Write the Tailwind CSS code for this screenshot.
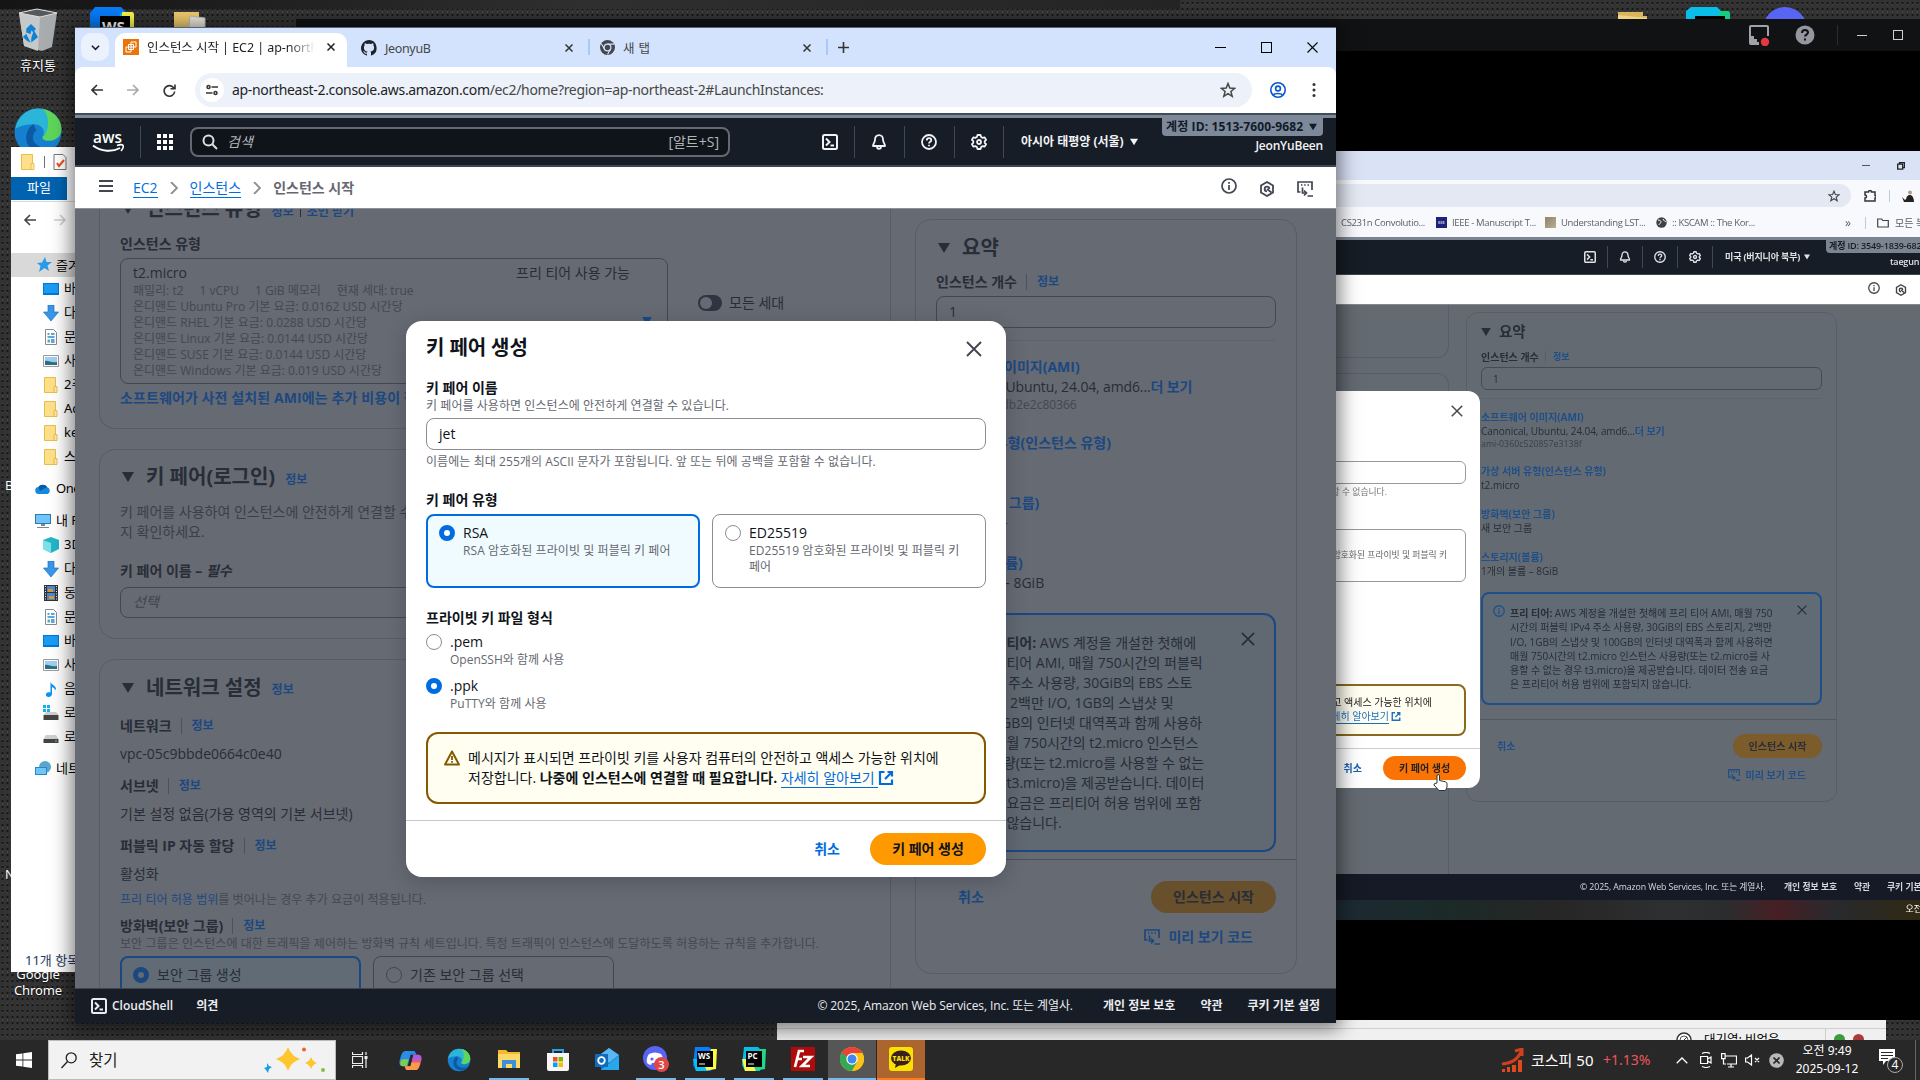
<!DOCTYPE html>
<html lang="ko">
<head>
<meta charset="utf-8">
<title>인스턴스 시작 | EC2 | ap-northeast-2</title>
<script src="https://cdn.jsdelivr.net/npm/@tailwindcss/browser@4"></script>
</head>
<body class="relative h-[1080px] w-[1920px] overflow-hidden bg-[#303030] font-['Open_Sans','Noto_Sans_CJK_KR',sans-serif] text-sm leading-5 whitespace-nowrap text-[#0f141a]">

<svg class="hidden">
  <symbol id="i-shell" viewBox="0 0 16 16"><g fill="none" stroke="currentColor" stroke-width="2"><rect x="1" y="1" width="14" height="14" rx="1.5"/><path d="M4 4.5 7.5 8 4 11.5M8.5 11.5H12"/></g></symbol>
  <symbol id="i-bell" viewBox="0 0 16 16"><g fill="none" stroke="currentColor" stroke-width="1.8"><path d="M8 1.2c-2.6 0-4 1.9-4 4.3C4 8.500 2 9.500 2 12h12c0-2.500-2-3.500-2-6.500 0-2.400-1.400-4.300-4-4.300Z" stroke-linejoin="round"/><path d="M6 12.500c0 1.500.8 2.300 2 2.300s2-.8 2-2.300"/></g></symbol>
  <symbol id="i-help" viewBox="0 0 16 16"><g fill="none" stroke="currentColor" stroke-width="1.8"><circle cx="8" cy="8" r="7"/><path d="M5.800 6.500C5.800 5 6.700 4.200 8 4.200s2.300.8 2.300 2c0 1.500-2.300 1.600-2.300 3.300M8 10.700v1.600"/></g></symbol>
  <symbol id="i-gear" viewBox="0 0 16 16"><g fill="none" stroke="currentColor" stroke-width="1.800" stroke-linejoin="round"><path d="M6.500 1h3l.6 2 1.600.9 2-.5 1.400 2.500L13.700 7.200v1.600l1.400 1.300-1.400 2.500-2-.5-1.600.9-.6 2h-3l-.6-2-1.600-.9-2 .5L.9 10.100l1.400-1.300V7.200L.9 5.900l1.400-2.500 2 .5L5.900 3Z"/><circle cx="8" cy="8" r="2"/></g></symbol>
  <symbol id="i-info" viewBox="0 0 16 16"><g fill="none" stroke="currentColor" stroke-width="1.700"><circle cx="8" cy="8" r="7"/><path d="M8 7v5M8 4v1.800"/></g></symbol>
  <symbol id="i-hex" viewBox="0 0 16 16"><g fill="none" stroke="currentColor" stroke-width="1.800"><path d="M8 1 14 4.500v7L8 15 2 11.500v-7Z"/><path d="M10.300 8A2.300 2.300 0 1 0 8 10.300M8 8l4.500 3.500"/></g></symbol>
  <symbol id="i-code" viewBox="0 0 16 16"><g fill="none" stroke="currentColor" stroke-width="1.700"><path d="M3.500 11H1V1h14v8M4 4h1.500M7.200 4h1.500M10.500 4H12M5.500 6.500v5.500H9M10.500 15H16"/><path d="M7 9.500 9.500 12 7 14.500"/></g></symbol>
  <symbol id="i-x" viewBox="0 0 16 16"><path d="m1 1 14 14m0-14L1 15" fill="none" stroke="currentColor" stroke-width="1.900"/></symbol>
  <symbol id="i-ext" viewBox="0 0 16 16"><path d="M6.500 2H2v12h12V9.500M9.500 2H14v4.500M14 2 7 9" fill="none" stroke="currentColor" stroke-width="2.200"/></symbol>
  <symbol id="i-tri" viewBox="0 0 12 10"><path d="M0 0h12L6 10Z" fill="currentColor"/></symbol>
  <symbol id="i-star" viewBox="0 0 16 16"><path d="m8 1.500 1.800 4.600 4.900.3-3.800 3.100 1.300 4.800L8 11.600l-4.200 2.700 1.300-4.800L1.300 6.400l4.900-.3Z" fill="none" stroke="currentColor" stroke-width="1.500"/></symbol>
  <symbol id="i-search" viewBox="0 0 16 16"><g fill="none" stroke="currentColor" stroke-width="2"><circle cx="6.500" cy="6.500" r="5"/><path d="m10.300 10.300 4.700 4.700"/></g></symbol>
  <symbol id="i-folder" viewBox="0 0 16 16"><path d="M1.500.5h11v15h-11Z" fill="#ffe08a" stroke="#e7c04c"/><path d="M11 9.500h3v6h-3Z" fill="#ffe9a8" stroke="#e7c04c"/></symbol>
  <symbol id="i-desk" viewBox="0 0 16 16"><path d="M0 2h16v12H0Z" fill="#0078d4"/><path d="M1 3h14v9H1Z" fill="#1a9cf5"/></symbol>
  <symbol id="i-down" viewBox="0 0 16 16"><path d="M5 0h6v7h4.500L8 16 .5 7H5Z" fill="#3a96e8" stroke="#1f74c4" stroke-width=".7"/></symbol>
  <symbol id="i-doc" viewBox="0 0 16 16"><path d="M2.500.5h8l3 3v12h-11Z" fill="#fff" stroke="#8a8a8a"/><path d="M4.500 5h2M4.500 8h7M8 5h3.500M8 11h3.500M8 13h3.500" stroke="#2a8ad4" stroke-width="1.300"/><path d="M4.500 10.500H7v3H4.500Z" fill="#6aa"/></symbol>
  <symbol id="i-pic" viewBox="0 0 16 16"><path d="M.5 2.500h15v11H.5Z" fill="#fff" stroke="#9a9a9a"/><path d="M2 4h12v8H2Z" fill="#9fd0ef"/><path d="M2 8c3-1 6 2 12 1v3H2Z" fill="#2f6f83"/></symbol>
  <symbol id="i-drive" viewBox="0 0 16 16"><path d="M3 6h10l2.500 4H.5Z" fill="#cfcfcf"/><path d="M.5 10h15v4H.5Z" fill="#444"/><path d="M12 11.500h2v1h-2Z" fill="#4be04b"/></symbol>
  <symbol id="i-edge" viewBox="0 0 32 32"><circle cx="16" cy="16" r="15" fill="#1580cf"/><path d="M1.500 14C3 6 9 1 16 1c9 0 15 6.500 15 13 0 5-4 7.500-8 7.500-3 0-4.500-1-4-2.500 1.500-1.500 1.500-8-6-8-6 0-10 2-11.500 3Z" fill="#2bb5d8"/><path d="M19 1.300C26 2.500 31 8 31 14c0 5-4 7.500-8 7.500-3 0-4.500-1-4-2.500 3-1 6-12 0-17.700Z" fill="#5ed65a"/><path d="M13 11c-5 3-7 12 0 17 4 3 10 2 14-3-3 1.500-9 2-12-1-3-2.500-3-7 0-9Z" fill="#0c59a4"/></symbol>
  <symbol id="i-ghost" viewBox="0 0 16 16"><path d="M8 0a8 8 0 0 0-2.500 15.600c.4.100.5-.2.500-.4v-1.500c-2.200.5-2.700-1-2.700-1-.4-.9-.9-1.200-.9-1.200-.7-.5.100-.5.100-.5.800.100 1.200.8 1.200.8.700 1.200 1.900.9 2.300.7.100-.5.300-.9.500-1.100-1.800-.2-3.600-.9-3.600-4 0-.9.300-1.600.8-2.100-.100-.2-.4-1 .100-2.100 0 0 .7-.2 2.200.8a7.600 7.600 0 0 1 4 0c1.500-1 2.200-.8 2.200-.8.4 1.100.2 1.900.1 2.100.5.600.8 1.300.8 2.100 0 3.100-1.900 3.700-3.700 3.900.3.300.6.800.6 1.500v2.200c0 .2.100.5.600.4A8 8 0 0 0 8 0Z" fill="#1f2328"/></symbol>
</svg>

<!-- Desktop wallpaper and icons -->
<div class="absolute inset-0 bg-[#333333] bg-[radial-gradient(circle,#161616_0.9px,transparent_1.3px),radial-gradient(circle,#4a4a4a_0.5px,transparent_1px)] bg-[length:5px_6px,5px_8px]"></div>
<div class="absolute top-0 left-0 h-[9px] w-[1180px] bg-linear-to-r from-[#151515] via-[#303030] to-[#252525]"></div>

<div class="absolute top-2 left-3 flex w-[52px] flex-col items-center">
  <svg class="h-[44px] w-[40px]" viewBox="0 0 40 44"><path d="m1 5 18-4 20 4-5 34-10 4-18-5Z" fill="#a9acae"/><path d="m1 5 21 4-2 34-14-5Z" fill="#c6c9ca"/><path d="m1 5 18-4 20 4-17 4Z" fill="#55595b" stroke="#dedede"/><path d="m9 21 4-4 4 4-2 2-2-2-1 4-3-1Zm7 3 3 5-5 4v-3Zm-8 3 3 6-2-1-3-3Z" fill="#0c83d8" stroke="#0c83d8" stroke-width="1.500"/></svg>
  <span class="mt-[3px] font-['Noto_Sans','Noto_Sans_CJK_KR',sans-serif] text-[13px] text-white [text-shadow:0_1px_2px_#000]">휴지통</span>
</div>
<svg class="absolute top-[7px] left-[90px] h-11 w-11" viewBox="0 0 44 44"><path d="M5 0h26l8 8v36H0V6Z" fill="#087cfa"/><path d="M32 5h10q2 0 2 3v20H30Z" fill="#fcf84a"/><path d="m30 5 7 15-9 9Z" fill="#07c3f2"/><path d="M10 9h30v30H10Z" fill="#000"/><text x="12" y="25" fill="#fff" font-family="Open Sans" font-weight="700" font-size="15">WS</text></svg>
<svg class="absolute top-3 left-[174px] h-8 w-8" viewBox="0 0 32 32"><path d="M0 0h25v32H0Z" fill="#f0cc6d"/><path d="m13 32 3-28 15 2v26Z" fill="#eeeae0" stroke="#bbb"/></svg>
<svg class="absolute top-3 left-[1618px] h-8 w-8" viewBox="0 0 32 32"><path d="M0 0h25v4h4v28H0Z" fill="#d9b65d"/><path d="m0 3 29 3v5H0Z" fill="#eed386"/></svg>
<svg class="absolute top-[7px] left-[1686px] h-11 w-11" viewBox="0 0 44 44"><path d="M5 0h26l8 8v36H0V4Z" fill="#0abde8"/><path d="M34 4h8q2 0 2 3v20H28Z" fill="#15cf80"/><path d="M9 9h30v30H9Z" fill="#000"/></svg>
<div class="absolute top-[7px] left-[1763px] size-11 rounded-full bg-[#5865f2]"></div>
<svg class="absolute top-[107px] left-[13px] size-[50px]"><use href="#i-edge"/></svg>
<div class="absolute top-[475px] left-[5px] text-[13px] text-white">B</div>
<div class="absolute top-[864px] left-[5px] text-[13px] text-white">N</div>
<div class="absolute top-[966px] left-[9px] w-[58px] text-center font-['Noto_Sans',sans-serif] text-[13px] leading-4 tracking-[-0.1px] text-white [text-shadow:0_1px_2px_#000]">Google<br>Chrome</div>

<!-- File transfer client, behind -->
<div class="absolute top-[1000px] left-[777px] flex h-[40px] w-[1109px] flex-col justify-end overflow-hidden bg-[#f0f0f0]">
  <div class="flex h-[12px] items-start justify-end gap-2 overflow-hidden border-t border-[#d0d0d0] pr-[22px] text-[12.5px] leading-5 text-black">
    <svg class="mt-[3px] h-4 w-4" viewBox="0 0 16 16"><circle cx="8" cy="8" r="7" fill="#fff" stroke="#333" stroke-width="1.500"/><circle cx="8" cy="8" r="4" fill="none" stroke="#555"/><path d="m7 9 4-4" stroke="#333"/></svg>
    <span class="w-[117px] pt-px pl-1 font-['Noto_Sans','Noto_Sans_CJK_KR',sans-serif]">대기열: 비었음</span>
    <span class="h-4 border-l border-[#ccc]"></span>
    <span class="mt-[5px] size-[11px] rounded-full bg-[#3c9c3c]"></span><span class="mt-[5px] size-[11px] rounded-full bg-[#ad3a3a]"></span>
  </div>
</div>

<!-- File explorer -->
<div class="absolute top-[147px] left-[11px] flex h-[825px] w-[70px] flex-col overflow-hidden bg-white font-['Noto_Sans','Noto_Sans_CJK_KR',sans-serif] text-[13px] leading-[23px] text-black">
  <div class="flex h-[30px] items-center gap-[8px] pl-[9px]"><svg class="h-4 w-4"><use href="#i-folder"/></svg><span class="h-3 border-l border-gray-500"></span><svg class="h-4 w-[14px]" viewBox="0 0 14 16"><path d="M1 .500h9l3 3v12H1Z" fill="#fff" stroke="#777"/><path d="m4 9 2 3 5-6" fill="none" stroke="#e8501a" stroke-width="2"/></svg></div>
  <div class="flex h-[23px] w-[56px] items-center justify-center bg-[#0063b1] leading-[21px] text-white"><span class="-mt-0.5">파일</span></div>
  <div class="mt-px flex h-[36px] items-center gap-[16px] border-t border-[#dadbdc] pl-[12px]"><svg class="h-3 w-[14px]" viewBox="0 0 14 12"><path d="M7 1 2 6l5 5M2 6h11" fill="none" stroke="#444" stroke-width="1.600"/></svg><svg class="h-3 w-[14px]" viewBox="0 0 14 12"><path d="m7 1 5 5-5 5m5-5H1" fill="none" stroke="#ccc" stroke-width="1.600"/></svg></div>
  <div class="mt-[16px] flex h-[24px] items-center gap-[4px] bg-[#d9d9d9] pl-[25px]"><svg class="size-4 shrink-0" viewBox="0 0 16 16"><path d="m9 0 1.500 5H16l-4.500 3.500L13 14l-4.500-3L3 15l1.500-6L1 6l5-.500Z" fill="#2a9be8"/></svg><span>즐겨</span></div>
  <div class="flex h-6 gap-[5px] pl-8"><svg class="mt-1 size-4 shrink-0"><use href="#i-desk"/></svg>바탕</div>
  <div class="flex h-6 gap-[5px] pl-8"><svg class="mt-1 size-4 shrink-0"><use href="#i-down"/></svg>다운</div>
  <div class="flex h-6 gap-[5px] pl-8"><svg class="mt-1 size-4 shrink-0"><use href="#i-doc"/></svg>문서</div>
  <div class="flex h-6 gap-[5px] pl-8"><svg class="mt-1 size-4 shrink-0"><use href="#i-pic"/></svg>사진</div>
  <div class="flex h-6 gap-[5px] pl-8"><svg class="mt-1 size-4 shrink-0"><use href="#i-folder"/></svg>2주</div>
  <div class="flex h-6 gap-[5px] pl-8"><svg class="mt-1 size-4 shrink-0"><use href="#i-folder"/></svg>Ad</div>
  <div class="flex h-6 gap-[5px] pl-8"><svg class="mt-1 size-4 shrink-0"><use href="#i-folder"/></svg>ke</div>
  <div class="flex h-6 gap-[5px] pl-8"><svg class="mt-1 size-4 shrink-0"><use href="#i-folder"/></svg>스크</div>
  <div class="mt-2 flex h-6 gap-[5px] pl-6 tracking-[-0.5px]"><svg class="mt-1 size-4 shrink-0" viewBox="0 0 16 16"><path d="M4 13a3.500 3.500 0 0 1-.5-7 5 5 0 0 1 8.500 0 3.700 3.700 0 0 1 .5 7Z" fill="#1489de"/><path d="M3.500 6a5 5 0 0 1 8.500 0L5 10Z" fill="#0a5aa8"/></svg>One</div>
  <div class="mt-2 flex h-6 gap-[5px] pl-6"><svg class="mt-1 size-4 shrink-0" viewBox="0 0 16 16"><path d="M0 1h16v10H0Z" fill="#3178a8"/><path d="M1 2h14v8H1Z" fill="#6fc6fb"/><path d="M6 11h4v2H6ZM2 14h12v1H2Z" fill="#789"/></svg>내 P</div>
  <div class="flex h-6 gap-[5px] pl-8"><svg class="mt-1 size-4 shrink-0" viewBox="0 0 16 16"><path d="m8 0 8 3v9l-8 4-8-4V3Z" fill="#22b5c8"/><path d="m0 3 8 3v10l-8-4Z" fill="#7fe0e6"/></svg>3D</div>
  <div class="flex h-6 gap-[5px] pl-8"><svg class="mt-1 size-4 shrink-0"><use href="#i-down"/></svg>다운</div>
  <div class="flex h-6 gap-[5px] pl-8"><svg class="mt-1 size-4 shrink-0" viewBox="0 0 16 16"><path d="M1 0h14v16H1Z" fill="#333"/><path d="M4 1h8v6H4ZM4 8h8v7H4Z" fill="#4a86d8"/><path d="M5 4h5v3H5ZM6 11h5v3H6Z" fill="#d89b2a"/><path d="M2.500 1v14M13.500 1v14" stroke="#eee" stroke-dasharray="1 1.500"/></svg>동영</div>
  <div class="flex h-6 gap-[5px] pl-8"><svg class="mt-1 size-4 shrink-0"><use href="#i-doc"/></svg>문서</div>
  <div class="flex h-6 gap-[5px] pl-8"><svg class="mt-1 size-4 shrink-0"><use href="#i-desk"/></svg>바탕</div>
  <div class="flex h-6 gap-[5px] pl-8"><svg class="mt-1 size-4 shrink-0"><use href="#i-pic"/></svg>사진</div>
  <div class="flex h-6 gap-[5px] pl-8"><svg class="mt-1 size-4 shrink-0" viewBox="0 0 16 16"><path d="M7.500 0c0 4 5.500 4 5.500 8-.500 1-1 1-1 1 0-2-3-3-3-3v7c0 4-7 4-6 0 .500-2 3-2 4.500-1.500Z" fill="#0a93f0"/></svg>음악</div>
  <div class="flex h-6 gap-[5px] pl-8"><svg class="mt-1 size-4 shrink-0" viewBox="0 0 16 16"><path d="M0 0h3v3H0ZM4 0h3v3H4ZM0 4h3v3H0ZM4 4h3v3H4Z" fill="#17b0f0"/><path d="M3 7h10l2.500 3H.5Z" fill="#cfcfcf"/><path d="M.500 10h15v5H.500Z" fill="#444"/></svg>로컬</div>
  <div class="flex h-6 gap-[5px] pl-8"><svg class="mt-1 size-4 shrink-0"><use href="#i-drive"/></svg>로컬</div>
  <div class="mt-2 flex h-6 gap-[5px] pl-6"><svg class="mt-1 size-4 shrink-0" viewBox="0 0 16 16"><circle cx="10" cy="6" r="6" fill="#5aa6cc"/><path d="M0 6h12v8H0Z" fill="#2d86c4"/><path d="M1 7h10v6H1Z" fill="#6fc6fb"/></svg>네트</div>
  <div class="mt-auto pl-[14px] leading-[24px] text-[#1e395b]">11개 항목</div>
</div>

<!-- Screen-share window -->
<div class="absolute top-[19px] left-[296px] flex h-[1001px] w-[1624px] flex-col overflow-hidden bg-black">
  <div class="flex h-8 items-center justify-end bg-[#111213] text-[#9a9ba2]">
    <svg class="mr-[25px] size-[22px]" viewBox="0 0 22 22"><path d="M1 3q0-2 2-2h16q2 0 2 2v9h-2V3H3v9h3v3h3v3h2v3H3q-2 0-2-2Z" fill="#a1a2a9"/><path d="M2 12h4v3h3v3h2v3H3q-1 0-1-1Z" fill="#a1a2a9"/><circle cx="17" cy="18" r="4.200" fill="#e5383f"/></svg>
    <svg class="mr-[22px] size-[20px]" viewBox="0 0 20 20"><circle cx="10" cy="10" r="9.500" fill="#96979e"/><path d="M7 8c0-2 1.300-3 3-3s3 1 3 2.600c0 2-3 2-3 4M10 13.500v2" fill="none" stroke="#111" stroke-width="2"/></svg>
    <span class="mr-[19px] h-5 border-l border-[#2b2c30]"></span>
    <span class="mr-[26px] h-px w-[10px] bg-[#d0d0d0]"></span>
    <span class="mr-[17px] h-[10px] w-[10px] border border-[#d0d0d0]"></span>
  </div>
</div>
<div class="absolute top-[151px] left-[1320px] flex h-[769px] w-[600px] flex-col overflow-hidden bg-[#646a72] font-['Open_Sans','Noto_Sans_CJK_KR',sans-serif] text-[10px] leading-[14px] blur-[0.35px]">
  <div class="flex h-[29px] shrink-0 items-center justify-end gap-[27px] bg-[#dae2f6] pr-[15px]"><span class="h-px w-2 bg-[#555]"></span><svg class="size-[8px]" viewBox="0 0 8 8"><path d="M.7 2.200h5v5h-5ZM2.500 2V.7h5v5H6" fill="none" stroke="#222" stroke-width="1.300"/></svg></div>
  <div class="flex h-[31px] shrink-0 items-center bg-[#f8f9fd] text-[#444]">
    <div class="flex h-[23px] w-[531px] shrink-0 items-center justify-end rounded-r-full bg-[#e4e8f3] pr-[11px]"><svg class="size-[12px]"><use href="#i-star"/></svg></div>
    <svg class="ml-[13px] size-3 shrink-0" viewBox="0 0 12 12"><path d="M1 2h3.500a1 1 0 0 1 3 0H11v3.500a1 1 0 0 1 0 2.500v3H1V8a1.500 1.500 0 0 0 0-3Z" fill="none" stroke="#333" stroke-width="1.500"/></svg>
    <span class="ml-[13px] h-3 border-l border-[#bcd]"></span>
    <svg class="ml-[12px] size-3 shrink-0" viewBox="0 0 12 12"><circle cx="8" cy="2.500" r="2" fill="#b98"/><path d="M4 12c0-5 1-7 4-7s4 4 4 7ZM0 7l3 3 2-2v4H2Z" fill="#222"/></svg>
  </div>
  <div class="flex h-[26px] shrink-0 items-center bg-[#f8f9fd] pb-[3px] pl-[21px] text-[9.5px] tracking-[-0.35px] text-[#5d6066]">
    <span class="w-[95px] shrink-0">CS231n Convolutio...</span>
    <span class="mr-[5px] size-[11px] shrink-0 overflow-hidden bg-[#1c2378] text-center text-[4px] leading-[11px] text-white">IEEE</span><span class="w-[93px] shrink-0">IEEE - Manuscript T...</span>
    <span class="mr-[5px] size-[11px] shrink-0 bg-linear-to-br from-[#8e8468] to-[#b8ae93]"></span><span class="w-[95px] shrink-0">Understanding LST...</span>
    <svg class="mr-[5px] size-[11px] shrink-0" viewBox="0 0 11 11"><circle cx="5.500" cy="5.500" r="5.200" fill="#3d4045"/><path d="M2 3c2 0 3 1 3 2S3 7 3 8M7 2c0 2 3 2 3 3" stroke="#fff" fill="none"/></svg><span class="w-[173px] shrink-0">:: KSCAM :: The Kor...</span>
    <span class="w-[20px] shrink-0 text-[12px]">»</span><span class="mr-[11px] h-3 shrink-0 border-l border-[#bcd]"></span>
    <svg class="mr-[6px] h-[10px] w-3 shrink-0" viewBox="0 0 12 10"><path d="M.7 1h4l1 1.500h5.600V9H.7Z" fill="none" stroke="#444" stroke-width="1.200"/></svg><span class="shrink-0 text-[10px] tracking-normal">모든 북마크</span>
  </div>
  <div class="h-[3px] shrink-0 bg-[#7b8592]"></div>
  <div class="relative flex h-[35px] shrink-0 items-center border-b border-[#424650] bg-[#161d26] pl-[264px] text-[#e0e2e6]">
    <svg class="size-3"><use href="#i-shell"/></svg><span class="mx-[11px] h-[22px] border-l border-[#424650]"></span>
    <svg class="size-3"><use href="#i-bell"/></svg><span class="mx-[11px] h-[22px] border-l border-[#424650]"></span>
    <svg class="size-3"><use href="#i-help"/></svg><span class="mx-[11px] h-[22px] border-l border-[#424650]"></span>
    <svg class="size-3"><use href="#i-gear"/></svg><span class="mr-[12px] ml-[11px] h-[22px] border-l border-[#424650]"></span>
    <span class="w-[78px] text-[9px] font-bold tracking-[-0.15px]">미국 (버지니아 북부)</span><svg class="ml-px size-[6px]"><use href="#i-tri"/></svg>
    <div class="absolute -top-[3px] left-[506px] h-4 w-[100px] rounded-bl bg-[#7b8592] pl-[3px] text-[9px] leading-[17px] font-semibold tracking-[-0.15px] text-[#161d26]">계정 ID: 3549-1839-6821</div>
    <div class="absolute top-[15px] left-[570px] text-[9px] font-semibold tracking-[-0.2px]">taegun1</div>
  </div>
  <div class="flex h-[30px] shrink-0 items-center justify-end gap-[15px] border-b border-[#888] bg-white pr-[13px] text-[#444]"><svg class="mb-[3px] size-3"><use href="#i-info"/></svg><svg class="size-3"><use href="#i-hex"/></svg></div>
  <div class="relative flex h-[569px] shrink-0 text-[#272e38]">
    <div class="flex w-[129px] shrink-0 flex-col gap-[15px]"><div class="h-[53px] shrink-0 rounded-br-xl border-r border-b border-[#565e69]"></div><div class="flex-1 rounded-tr-xl border-t border-r border-[#565e69]"></div></div>
    <div class="ml-[17px] mt-[7px] flex h-[490px] w-[371px] flex-col rounded-xl border border-[#565e69] px-[14px] pt-[10px]">
      <div class="flex items-center gap-[8px] text-[14.5px] leading-[18px] font-bold"><svg class="h-[8px] w-[10px]"><use href="#i-tri"/></svg>요약</div>
      <div class="mt-[9px] flex items-center font-bold"><span class="w-[64px]">인스턴스 개수</span><span class="h-3 w-[8px] border-l border-[#565e69]"></span><span class="text-[9px] text-[#1f4f88]">정보</span></div>
      <div class="mt-[3px] flex h-[23px] shrink-0 items-center rounded-md border border-[#444b56] pl-[11px]">1</div>
      <div class="mt-[8px] border-t border-[#5c636d]"></div>
      <div class="mt-[11px] font-bold text-[#1f4f88]">소프트웨어 이미지(AMI)</div>
      <div class="tracking-[-0.08px]">Canonical, Ubuntu, 24.04, amd6...<b class="text-[#1f4f88]">더 보기</b></div>
      <div class="text-[8.8px] leading-[12px] text-[#3a414b]">ami-0360c520857e3138f</div>
      <div class="mt-[14px] font-bold text-[#1f4f88]">가상 서버 유형(인스턴스 유형)</div>
      <div>t2.micro</div>
      <div class="mt-[15px] font-bold text-[#1f4f88]">방화벽(보안 그룹)</div>
      <div>새 보안 그룹</div>
      <div class="mt-[15px] font-bold text-[#1f4f88]">스토리지(볼륨)</div>
      <div>1개의 볼륨 – 8GiB</div>
      <div class="mt-[14px] flex h-[113px] shrink-0 rounded-lg border-2 border-[#1f4f88] bg-[#616b75] pt-[11px] pl-[10px]">
        <svg class="size-3 shrink-0 text-[#1f4f88]"><use href="#i-info"/></svg>
        <div class="mt-px ml-[5px] w-[287px] leading-[14.3px]"><b>프리 티어:</b> AWS 계정을 개설한 첫해에 프리 티어 AMI, 매월 750<br>시간의 퍼블릭 IPv4 주소 사용량, 30GiB의 EBS 스토리지, 2백만<br>I/O, 1GB의 스냅샷 및 100GB의 인터넷 대역폭과 함께 사용하면<br>매월 750시간의 t2.micro 인스턴스 사용량(또는 t2.micro를 사<br>용할 수 없는 경우 t3.micro)을 제공받습니다. 데이터 전송 요금<br>은 프리티어 허용 범위에 포함되지 않습니다.</div>
        <svg class="size-[10px]"><use href="#i-x"/></svg>
      </div>
      <div class="-mx-[14px] mt-[14px] border-t border-[#4f5762]"></div>
      <div class="mt-[14px] flex h-6 items-center justify-between pl-4 font-bold"><span class="text-[#1f4f88]">취소</span><span class="flex h-6 w-[89px] items-center justify-center rounded-full bg-[#7d5c2c]">인스턴스 시작</span></div>
      <div class="mt-[10px] flex items-center justify-end gap-[6px] pr-4 font-bold text-[#1f4f88]"><svg class="size-3"><use href="#i-code"/></svg>미리 보기 코드</div>
    </div>
    <!-- Shared modal, right part -->
    <div class="absolute top-[86px] left-0 flex h-[397px] w-[160px] flex-col overflow-hidden rounded-r-xl bg-white pr-[14px] text-[#222]">
      <svg class="mt-[14px] mr-[3px] size-3 shrink-0 self-end text-[#444]"><use href="#i-x"/></svg>
      <div class="mt-[44px] h-[23px] shrink-0 rounded-r-md border border-[#999]"></div>
      <div class="mt-[1px] pr-[79px] text-right text-[8.8px] text-[#777]">할 수 없습니다.</div>
      <div class="mt-[30px] h-[53px] shrink-0 rounded-r-md border border-[#999] pt-[10px] pr-[18px] text-right text-[8.800px] text-[#666]"><div class="h-[8px]"></div>암호화된 프라이빗 및 퍼블릭 키</div>
      <div class="mt-[102px] h-[52px] shrink-0 rounded-r-lg border-2 border-[#8a6a20] bg-[#fffef0] pt-[9px] text-right"><div class="pr-[32px]">하고 액세스 가능한 위치에</div><div class="flex justify-end gap-[2px] pr-[63px] text-[#1a6fc4]"><span class="border-b">자세히 알아보기</span><svg class="mt-[2px] size-[11px]"><use href="#i-ext"/></svg></div></div>
      <div class="-mr-[14px] mt-[12px] border-t border-[#ccc]"></div>
      <div class="mt-[7px] flex items-center justify-end gap-[21px] font-bold"><span class="text-[#1a5fb4]">취소</span><span class="flex h-6 w-[83px] items-center justify-center rounded-full bg-[#fa7305]">키 페어 생성</span></div>
    </div>
    <svg class="absolute top-[469px] left-[113px] h-[17px] w-[15px]" viewBox="0 0 15 17"><path d="M4 9V2q0-1.500 1.200-1.500T6.500 2v4.500l6 1.300q1.500.4 1.500 2V13l-1.500 3.500H6L1 11q0-1.500 1-1.500Z" fill="#fff" stroke="#333"/></svg>
  </div>
  <div class="flex h-[26px] shrink-0 items-center bg-[#161a26] pl-[260px] text-[8.8px] text-[#d5d8de]"><span class="w-[204px] shrink-0 tracking-[-0.12px]">© 2025, Amazon Web Services, Inc. 또는 계열사.</span><b class="w-[70px] shrink-0">개인 정보 보호</b><b class="w-[33px] shrink-0">약관</b><b class="shrink-0">쿠키 기본 설정</b></div>
  <div class="flex flex-1 items-start justify-end bg-[linear-gradient(90deg,#1d2a36_0%,#1b2a28_20%,#262625_40%,#2e2f31_58%,#2b2c2e_68%,#471f24_76%,#282a2e_86%,#302812_100%)] text-[9px] text-white"><span class="mt-[2px] -mr-[2px]">오전</span></div>
</div>

<!-- Browser window -->
<div class="absolute top-[27px] left-[75px] flex h-[996px] w-[1261px] flex-col overflow-hidden border-t border-[#5a6270] bg-white shadow-[0_2px_18px_4px_rgba(0,0,0,0.5)]">
  <!-- Tab strip -->
  <div class="flex h-[39px] shrink-0 bg-[#d3e3fd] font-['Noto_Sans','Noto_Sans_CJK_KR',sans-serif] text-[12px] leading-4 text-[#474747]">
    <div class="mt-[5px] ml-[6px] flex size-[28px] items-center justify-center rounded-[10px] bg-[#ebf2fe]"><svg class="size-[9px]" viewBox="0 0 10 10"><path d="m1 3 4 4 4-4" fill="none" stroke="#1f1f1f" stroke-width="1.800"/></svg></div>
    <div class="mt-[5px] ml-[6px] flex h-[34px] w-[232px] rounded-t-[10px] bg-white pt-[6px] pl-2 text-[#1f1f1f]">
      <svg class="size-4 shrink-0" viewBox="0 0 16 16"><path d="M0 0h16v16H0Z" fill="#e8740c"/><path d="M3 8h5v5H3ZM8 3h5v5H8Z" fill="none" stroke="#fff"/><path d="M5.500 5.500h5v5h-5Z" fill="none" stroke="#fff"/></svg>
      <span class="mt-px ml-2 w-[168px] overflow-hidden text-[12.500px] tracking-[-0.05px] [mask-image:linear-gradient(90deg,#000_85%,transparent)]">인스턴스 시작 | EC2 | ap-northeast-2</span>
      <svg class="mt-[4px] ml-[12px] size-[8px]" viewBox="0 0 8 8"><path d="m.5.5 7 7m0-7-7 7" stroke="#1f1f1f" stroke-width="1.500"/></svg>
    </div>
    <div class="flex w-[241px] items-center pl-[14px]"><svg class="size-4"><use href="#i-ghost"/></svg><span class="mt-[2px] ml-2 text-[12.500px] tracking-[-0.35px]">JeonyuB</span><svg class="mr-[15px] ml-auto size-[8px]" viewBox="0 0 8 8"><path d="m.5.5 7 7m0-7-7 7" stroke="#333" stroke-width="1.500"/></svg></div>
    <div class="mt-[11px] h-4 w-[2px] bg-[#a8c7fa]"></div>
    <div class="flex w-[236px] items-center pl-[10px]"><svg class="size-[15px]" viewBox="0 0 16 16"><circle cx="8" cy="8" r="8" fill="#43474e"/><circle cx="8" cy="8" r="3.600" fill="#43474e" stroke="#d3e3fd" stroke-width="1.300"/><path d="M8 4.400h7M4.900 9.800 1.400 4M11.100 9.800 8 15.500" stroke="#d3e3fd" stroke-width="1.200"/></svg><span class="mt-[2px] ml-[8px] text-[12.500px] tracking-[0.4px]">새 탭</span><svg class="mr-[15px] ml-auto size-[8px]" viewBox="0 0 8 8"><path d="m.5.5 7 7m0-7-7 7" stroke="#333" stroke-width="1.500"/></svg></div>
    <div class="mt-[11px] h-4 w-[2px] bg-[#a8c7fa]"></div>
    <div class="flex flex-1 items-center justify-between pr-[18px] pl-[10px]"><svg class="size-[11px]" viewBox="0 0 11 11"><path d="M5.500 0v11M0 5.500h11" stroke="#333" stroke-width="1.600"/></svg>
      <div class="flex items-center gap-[35px]"><span class="h-px w-[11px] bg-black"></span><span class="size-[11px] border border-black"></span><svg class="size-[11px]" viewBox="0 0 11 11"><path d="m.5.5 10 10m0-10-10 10" stroke="#000" stroke-width="1.100"/></svg></div></div>
  </div>
  <!-- Toolbar -->
  <div class="shrink-0 bg-[#d3e3fd]"><div class="flex h-[46px] items-center rounded-t-lg bg-white pl-[16px] text-[#474747]">
    <svg class="size-3" viewBox="0 0 12 12"><path d="M6 1 1 6l5 5M1 6h11" fill="none" stroke="#333" stroke-width="1.700"/></svg>
    <svg class="ml-6 size-3" viewBox="0 0 12 12"><path d="m6 1 5 5-5 5m5-5H0" fill="none" stroke="#aaa" stroke-width="1.700"/></svg>
    <svg class="ml-6 size-[13px]" viewBox="0 0 13 13"><path d="M11 4.200A5.300 5.300 0 1 0 11.700 7.500M12 .5v4.300H7.500" fill="none" stroke="#333" stroke-width="1.600"/></svg>
    <div class="ml-[19px] flex h-[34px] w-[1057px] items-center rounded-full bg-[#ecf1fa] pl-[5px]">
      <span class="flex size-6 items-center justify-center rounded-full bg-white"><svg class="size-3" viewBox="0 0 12 12"><g fill="none" stroke="#333" stroke-width="1.500"><circle cx="2.500" cy="3" r="1.500"/><circle cx="9.500" cy="9" r="1.500"/><path d="M5.500 3H12M0 9h6.500"/></g></svg></span>
      <span class="ml-[8px] font-['Noto_Sans',sans-serif] text-[14px] tracking-[-0.32px]"><span class="text-[#1f1f1f]">ap-northeast-2.console.aws.amazon.com</span>/ec2/home?region=ap-northeast-2#LaunchInstances:</span>
      <svg class="mr-4 ml-auto size-4"><use href="#i-star"/></svg>
    </div>
    <svg class="ml-[18px] size-4 text-[#0b57d0]" viewBox="0 0 16 16"><g fill="none" stroke="currentColor" stroke-width="1.600"><circle cx="8" cy="8" r="7.200"/><circle cx="8" cy="6.500" r="2.400"/><path d="M3.500 13c1-2 7.500-2 9 0"/></g></svg>
    <svg class="ml-[26px] h-4 w-1" viewBox="0 0 4 16"><g fill="#333"><circle cx="2" cy="2.500" r="1.500"/><circle cx="2" cy="8" r="1.500"/><circle cx="2" cy="13.500" r="1.500"/></g></svg>
  </div></div>
  <!-- Console header -->
  <div class="h-[5px] shrink-0 border-t-2 border-[#424d5c] bg-[#7d8998]"></div>
  <div class="relative flex h-[49px] shrink-0 items-center border-b-2 border-[#424650] bg-[#161d26] pl-[17px] text-[#f3f3f7]">
    <svg class="h-[22px] w-[32px]" viewBox="0 0 32 22"><text x="1" y="11.500" fill="#fff" font-family="Open Sans" font-weight="600" font-size="15.500" textLength="29" lengthAdjust="spacingAndGlyphs">aws</text><path d="M1 14.500c8 6.500 20 6.500 27 2.500" fill="none" stroke="#fff" stroke-width="2"/><path d="M25 14.500c3-1 5.500-.8 6-.2.500.800-.2 3.500-2 5.700" fill="none" stroke="#fff" stroke-width="1.600"/></svg>
    <span class="ml-4 h-8 border-l border-[#424650]"></span>
    <svg class="ml-4 size-4" viewBox="0 0 16 16"><path d="M0 0h4v4H0ZM6 0h4v4H6ZM12 0h4v4h-4ZM0 6h4v4H0ZM6 6h4v4H6ZM12 6h4v4h-4ZM0 12h4v4H0ZM6 12h4v4H6ZM12 12h4v4h-4Z" fill="#fff"/></svg>
    <div class="ml-[17px] flex h-[30px] w-[540px] items-center rounded-lg border-2 border-[#656871] bg-[#0f141a] pr-[9px] pl-[10px] text-[#b4b4bb]"><svg class="size-4 text-[#dedee3]"><use href="#i-search"/></svg><i class="ml-[9px]">검색</i><span class="ml-auto">[알트+S]</span></div>
    <svg class="ml-[92px] size-4"><use href="#i-shell"/></svg><span class="ml-4 h-8 border-l border-[#424650]"></span>
    <svg class="ml-4 size-4"><use href="#i-bell"/></svg><span class="ml-[17px] h-8 border-l border-[#424650]"></span>
    <svg class="ml-4 size-4"><use href="#i-help"/></svg><span class="ml-[17px] h-8 border-l border-[#424650]"></span>
    <svg class="ml-4 size-4"><use href="#i-gear"/></svg><span class="ml-4 h-8 border-l border-[#424650]"></span>
    <span class="ml-[17px] w-[109px] text-[12px] font-bold">아시아 태평양 (서울)</span><svg class="h-[8px] w-[8px]"><use href="#i-tri"/></svg>
    <div class="absolute top-0 right-[13px] flex w-[161px] flex-col items-end text-[12px] leading-[18px] font-semibold"><div class="flex h-[18px] w-full items-center justify-between rounded-b bg-[#7d8998] pr-[6px] pl-1 text-[#0f1b2a]"><span class="font-bold tracking-[0.12px]">계정 ID: 1513-7600-9682</span><svg class="h-[8px] w-[8px]"><use href="#i-tri"/></svg></div><span class="mt-px tracking-[-0.2px]">JeonYuBeen</span></div>
  </div>
  <!-- Breadcrumbs -->
  <div class="flex h-[42px] shrink-0 items-center border-b border-[#8d9099] bg-white pl-[24px] text-[#424650]">
    <svg class="mb-[3px] h-3 w-[14px]" viewBox="0 0 14 12"><path d="M0 1h14M0 6h14M0 11h14" stroke="#424650" stroke-width="2"/></svg>
    <span class="ml-[20px] border-b border-[#006ce0] leading-[19px] text-[#006ce0]">EC2</span>
    <svg class="ml-[12px] h-3 w-2" viewBox="0 0 8 12"><path d="m1 0 6 6-6 6" fill="none" stroke="#8c8c94" stroke-width="1.900"/></svg>
    <span class="ml-[12px] border-b border-[#006ce0] leading-[19px] text-[#006ce0]">인스턴스</span>
    <svg class="ml-[12px] h-3 w-2" viewBox="0 0 8 12"><path d="m1 0 6 6-6 6" fill="none" stroke="#8c8c94" stroke-width="1.900"/></svg>
    <span class="ml-[12px] font-bold text-[#656871]">인스턴스 시작</span>
    <svg class="mb-[4px] ml-auto size-4"><use href="#i-info"/></svg><svg class="mt-[2px] ml-[22px] size-4"><use href="#i-hex"/></svg><svg class="mt-[2px] mr-[23px] ml-[22px] size-4"><use href="#i-code"/></svg>
  </div>
  <!-- Page under backdrop -->
  <div class="relative flex h-[779px] shrink-0 overflow-hidden bg-[#666a73] pl-6 text-[#282d37]">
    <div class="flex w-[792px] shrink-0 flex-col">
      <div class="h-[220px] shrink-0 rounded-b-2xl border-x border-b border-[#575c66] px-5">
        <div class="-mt-[14px] flex h-[28px] items-center"><svg class="ml-[2px] h-[10px] w-3"><use href="#i-tri"/></svg><span class="ml-[12px] text-[20px] font-bold">인스턴스 유형</span><b class="mt-[6px] ml-[10px] text-[12px] text-[#1c4880]">정보</b><span class="mx-[6px] mt-[4px] h-3 border-l border-[#282d37]"></span><b class="mt-[6px] text-[12px] text-[#1c4880]">조언 받기</b></div>
        <div class="mt-[11px] font-bold">인스턴스 유형</div>
        <div class="flex items-center">
          <div class="mt-[4px] h-[126px] w-[548px] rounded-lg border border-[#424751] px-3 pt-[4px]">
            <div class="flex justify-between pr-[25px]"><span>t2.micro</span><span>프리 티어 사용 가능</span></div>
            <div class="flex h-4 gap-[16px] text-[12px] leading-4 text-[#434852]"><span>패밀리: t2</span><span>1 vCPU</span><span>1 GiB 메모리</span><span>현재 세대: true</span></div>
            <div class="relative text-[12px] leading-4 text-[#434852]">온디맨드 Ubuntu Pro 기본 요금: 0.0162 USD 시간당<br>온디맨드 RHEL 기본 요금: 0.0288 USD 시간당<br>온디맨드 Linux 기본 요금: 0.0144 USD 시간당<br>온디맨드 SUSE 기본 요금: 0.0144 USD 시간당<br>온디맨드 Windows 기본 요금: 0.019 USD 시간당<svg class="absolute top-[18px] right-[3px] h-[8px] w-[10px] text-[#1c4880]"><use href="#i-tri"/></svg></div>
          </div>
          <div class="-mt-[32px] ml-[30px] flex items-center gap-[7px]"><span class="flex h-4 w-6 items-center rounded-full bg-[#2f3540] pl-[2px]"><span class="size-3 rounded-full bg-[#666a73]"></span></span>모든 세대</div>
        </div>
        <div class="mt-[4px] font-bold tracking-[0.1px] text-[#1c4880]">소프트웨어가 사전 설치된 AMI에는 추가 비용이 적용됩니다</div>
      </div>
      <div class="mt-5 h-[190px] shrink-0 rounded-2xl border border-[#575c66] px-5 pt-[15px]">
        <div class="flex h-6 items-center"><svg class="ml-[2px] h-[10px] w-3"><use href="#i-tri"/></svg><span class="ml-[12px] text-[20px] font-bold">키 페어(로그인)</span><b class="mt-[5px] ml-[10px] text-[12px] text-[#1c4880]">정보</b></div>
        <div class="mt-[13px] text-[#3a3f49]">키 페어를 사용하여 인스턴스에 안전하게 연결할 수 있습니다. 인스턴스를 시작하기 전에 선택한 키 페어<br>지 확인하세요.</div>
        <div class="mt-[19px] font-bold">키 페어 이름 – <i>필수</i></div>
        <div class="mt-[6px] flex h-[31px] w-[548px] items-center rounded-lg border border-[#424751] pb-px pl-[12px] text-[#3f444e] italic">선택</div>
      </div>
      <div class="mt-5 h-[400px] shrink-0 rounded-t-2xl border border-[#575c66] px-5 pt-[16px]">
        <div class="flex h-6 items-center"><svg class="ml-[2px] h-[10px] w-3"><use href="#i-tri"/></svg><span class="ml-[12px] text-[20px] font-bold">네트워크 설정</span><b class="mt-[4px] ml-[10px] text-[12px] text-[#1c4880]">정보</b></div>
        <div class="mt-[16px] flex items-center gap-[9px] font-bold">네트워크<span class="h-4 border-l border-[#4d525c]"></span><span class="ml-px text-[12px] text-[#1c4880]">정보</span></div>
        <div class="mt-[8px]">vpc-05c9bbde0664c0e40</div>
        <div class="mt-[12px] flex items-center gap-[9px] font-bold">서브넷<span class="h-4 border-l border-[#4d525c]"></span><span class="ml-px text-[12px] text-[#1c4880]">정보</span></div>
        <div class="mt-[8px]">기본 설정 없음(가용 영역의 기본 서브넷)</div>
        <div class="mt-[12px] flex items-center gap-[9px] font-bold">퍼블릭 IP 자동 할당<span class="h-4 border-l border-[#4d525c]"></span><span class="ml-px text-[12px] text-[#1c4880]">정보</span></div>
        <div class="mt-[8px]">활성화</div>
        <div class="mt-[7px] text-[12px] leading-[18px] tracking-[0.06px] text-[#434852]"><span class="text-[#1c4880]">프리 티어 허용 범위</span>를 벗어나는 경우 추가 요금이 적용됩니다.</div>
        <div class="mt-[7px] flex items-center gap-[9px] font-bold">방화벽(보안 그룹)<span class="h-4 border-l border-[#4d525c]"></span><span class="ml-px text-[12px] text-[#1c4880]">정보</span></div>
        <div class="text-[12px] leading-4 tracking-[0.075px] text-[#434852]">보안 그룹은 인스턴스에 대한 트래픽을 제어하는 방화벽 규칙 세트입니다. 특정 트래픽이 인스턴스에 도달하도록 허용하는 규칙을 추가합니다.</div>
        <div class="mt-[4px] flex gap-3">
          <div class="flex h-[60px] w-[241px] gap-2 rounded-lg border-2 border-[#1c4880] bg-[#606b76] px-[11px] pt-[7px]"><span class="mt-[2px] size-4 rounded-full border-[5px] border-[#1c4880]"></span>보안 그룹 생성</div>
          <div class="flex h-[60px] w-[241px] gap-2 rounded-lg border border-[#424751] px-3 pt-[8px]"><span class="mt-[2px] size-4 rounded-full border border-[#424751]"></span>기존 보안 그룹 선택</div>
        </div>
      </div>
    </div>
    <!-- Summary -->
    <div class="mt-[10px] ml-6 flex h-[755px] w-[382px] shrink-0 flex-col rounded-2xl border border-[#575c66] px-5 pt-4">
      <div class="flex h-6 items-center"><svg class="ml-[2px] h-[10px] w-3"><use href="#i-tri"/></svg><span class="ml-[12px] text-[20px] font-bold">요약</span></div>
      <div class="mt-3 flex items-center gap-[9px] font-bold">인스턴스 개수<span class="h-4 border-l border-[#4d525c]"></span><span class="ml-px text-[12px] text-[#1c4880]">정보</span></div>
      <div class="mt-[4px] flex h-8 shrink-0 items-center rounded-lg border border-[#424751] pl-[12px]">1</div>
      <div class="mt-3 border-t border-[#5e636c]"></div>
      <div class="mt-[16px] font-bold text-[#1c4880]">소프트웨어 이미지(AMI)</div>
      <div class="tracking-[-0.14px]">Canonical, Ubuntu, 24.04, amd6...<b class="text-[#1c4880]">더 보기</b></div>
      <div class="text-[12px] leading-4 text-[#434852]">ami-00e73adb2e2c80366</div>
      <div class="mt-5 font-bold text-[#1c4880]">가상 서버 유형(인스턴스 유형)</div>
      <div>t2.micro</div>
      <div class="mt-5 font-bold text-[#1c4880]">방화벽(보안 그룹)</div>
      <div>새 보안 그룹</div>
      <div class="mt-5 font-bold text-[#1c4880]">스토리지(볼륨)</div>
      <div>1개의 볼륨 – 8GiB</div>
      <div class="mt-5 flex h-[239px] shrink-0 rounded-xl border-2 border-[#1c4880] bg-[#606871] pt-[18px] pl-[14px]">
        <svg class="mt-[2px] size-4 shrink-0 text-[#1c4880]"><use href="#i-info"/></svg>
        <div class="ml-[9px] w-[264px]"><b>프리 티어:</b> AWS 계정을 개설한 첫해에<br>프리 티어 AMI, 매월 750시간의 퍼블릭<br>IPv4 주소 사용량, 30GiB의 EBS 스토<br>리지, 2백만 I/O, 1GB의 스냅샷 및<br>100GB의 인터넷 대역폭과 함께 사용하<br>면 매월 750시간의 t2.micro 인스턴스<br>사용량(또는 t2.micro를 사용할 수 없는<br>경우 t3.micro)을 제공받습니다. 데이터<br>전송 요금은 프리티어 허용 범위에 포함<br>되지 않습니다.</div>
        <svg class="-mt-px size-[14px]"><use href="#i-x"/></svg>
      </div>
      <div class="-mx-5 mt-[7px] border-t border-[#4b505a]"></div>
      <div class="mt-[21px] flex h-8 items-center justify-between pl-[22px] font-bold"><span class="text-[#1c4880]">취소</span><span class="flex h-8 w-[125px] items-center justify-center rounded-full bg-[#69502c]">인스턴스 시작</span></div>
      <div class="mt-[14px] flex items-center justify-end gap-2 pr-[23px] font-bold text-[#1c4880]"><svg class="size-4"><use href="#i-code"/></svg>미리 보기 코드</div>
    </div>

    <!-- Create key pair dialog -->
    <div class="absolute top-[112px] left-[331px] flex h-[556px] w-[600px] flex-col rounded-2xl bg-white text-[#0f141a] shadow-[0_4px_20px_1px_rgba(0,7,22,0.18)]">
      <div class="flex h-[52px] items-center justify-between pt-[2px] pr-[24px] pl-5"><span class="text-[20px] font-bold tracking-[-0.1px]">키 페어 생성</span><svg class="mt-[2px] size-4 text-[#424650]"><use href="#i-x"/></svg></div>
      <div class="flex flex-col px-5 pt-[5px]">
        <div class="font-bold">키 페어 이름</div>
        <div class="text-[12px] leading-4 tracking-[0.06px] text-[#656871]">키 페어를 사용하면 인스턴스에 안전하게 연결할 수 있습니다.</div>
        <div class="mt-[4px] flex h-8 items-center rounded-lg border border-[#8c8c94] pl-3">jet</div>
        <div class="mt-[4px] text-[12px] leading-4 tracking-[0.07px] text-[#656871]">이름에는 최대 255개의 ASCII 문자가 포함됩니다. 앞 또는 뒤에 공백을 포함할 수 없습니다.</div>
        <div class="mt-[20px] font-bold">키 페어 유형</div>
        <div class="mt-[4px] flex gap-3">
          <div class="flex h-[74px] w-[274px] gap-2 rounded-lg border-2 border-[#006ce0] bg-[#f0fbff] px-[11px] pt-[7px]"><span class="mt-[2px] size-4 shrink-0 rounded-full border-[5px] border-[#006ce0] bg-white"></span><div>RSA<div class="text-[12px] leading-4 tracking-[0.07px] text-[#656871]">RSA 암호화된 프라이빗 및 퍼블릭 키 페어</div></div></div>
          <div class="flex h-[74px] w-[274px] gap-2 rounded-lg border border-[#8c8c94] px-3 pt-[8px]"><span class="mt-[2px] size-4 shrink-0 rounded-full border border-[#8c8c94]"></span><div>ED25519<div class="text-[12px] leading-4 tracking-[0.06px] text-[#656871]">ED25519 암호화된 프라이빗 및 퍼블릭 키<br>페어</div></div></div>
        </div>
        <div class="mt-[20px] font-bold">프라이빗 키 파일 형식</div>
        <div class="mt-[4px] flex gap-2"><span class="mt-[2px] size-4 shrink-0 rounded-full border border-[#8c8c94]"></span><div>.pem<div class="text-[12px] leading-4 text-[#656871]">OpenSSH와 함께 사용</div></div></div>
        <div class="mt-[8px] flex gap-2"><span class="mt-[2px] size-4 shrink-0 rounded-full border-[5px] border-[#006ce0]"></span><div>.ppk<div class="text-[12px] leading-4 tracking-[0.06px] text-[#656871]">PuTTY와 함께 사용</div></div></div>
        <div class="mt-[20px] flex h-[72px] gap-[8px] rounded-xl border-2 border-[#855900] bg-[#fffef0] pt-[14px] pl-4">
          <svg class="mt-[2px] size-4 shrink-0" viewBox="0 0 16 16"><path d="M8 1.500 15 14.500H1Z" fill="none" stroke="#855900" stroke-width="2" stroke-linejoin="round"/><path d="M8 6v4M8 11v1.800" stroke="#855900" stroke-width="1.800"/></svg>
          <div>메시지가 표시되면 프라이빗 키를 사용자 컴퓨터의 안전하고 액세스 가능한 위치에<div class="flex">저장합니다.&nbsp;<b>나중에 인스턴스에 연결할 때 필요합니다.</b>&nbsp;<span class="flex h-5 border-b border-[#006ce0] pr-[3px] text-[#006ce0]">자세히 알아보기</span><svg class="mt-[2px] size-4 text-[#006ce0]"><use href="#i-ext"/></svg></div></div>
        </div>
      </div>
      <div class="mt-auto flex h-[57px] items-center justify-end gap-[30px] border-t border-[#c6c6cd] pr-5 font-bold"><span class="text-[#006ce0]">취소</span><span class="flex h-8 w-[116px] items-center justify-center rounded-full bg-[#ff9900]">키 페어 생성</span></div>
    </div>
  </div>
  <!-- Console footer -->
  <div class="flex flex-1 items-center border-t border-[#424650] bg-[#161d26] pr-4 pl-4 text-[12px] text-[#ebebf0]">
    <svg class="size-4"><use href="#i-shell"/></svg><span class="ml-[5px] font-semibold">CloudShell</span><b class="ml-[23px]">의견</b>
    <span class="ml-auto tracking-[-0.1px]">© 2025, Amazon Web Services, Inc. 또는 계열사.</span><b class="ml-[30px]">개인 정보 보호</b><b class="ml-[25px]">약관</b><b class="ml-[25px]">쿠키 기본 설정</b>
  </div>
</div>

<!-- Taskbar -->
<div class="absolute top-[1040px] left-0 flex h-10 w-full items-stretch bg-[#282828] font-['Noto_Sans','Noto_Sans_CJK_KR',sans-serif] text-white">
  <div class="flex w-12 items-center justify-center"><svg class="size-4" viewBox="0 0 16 16"><path d="M0 2.300 6.500 1.400v6.200H0ZM7.300 1.300 16 0v7.600H7.300ZM0 8.400h6.500v6.200L0 13.700ZM7.300 8.400H16V16l-8.700-1.300Z" fill="#fff"/></svg></div>
  <div class="flex w-[288px] items-center border border-[#bbb] bg-[#f2f2f2] pl-[12px] text-[#222]">
    <svg class="h-[17px] w-4" viewBox="0 0 16 17"><circle cx="10.200" cy="5.800" r="5" fill="none" stroke="#222" stroke-width="1.300"/><path d="M6.500 9.500.5 16" stroke="#222" stroke-width="1.400"/></svg><span class="ml-[12px] text-[15.5px]">찾기</span>
    <svg class="mr-[9px] ml-auto h-[26px] w-[62px]" viewBox="0 0 62 26"><path d="M24 0q3 9 12 12-9 3-12 12-3-9-12-12 9-3 12-12Z" fill="#ffc52e"/><path d="M47 10q1.500 4.500 6 6-4.500 1.500-6 6-1.500-4.500-6-6 4.500-1.500 6-6Z" fill="#ffc52e"/><path d="m3 16 2 3 3 1-3 2-1 4-2-3-2-2 3-1Z" fill="#14a0e8"/><circle cx="40" cy="2.500" r="2" fill="#f2622e"/><circle cx="59" cy="23" r="2" fill="#7fc241"/></svg>
  </div>
  <div class="flex w-[47px] items-center justify-center"><svg class="h-4 w-4" viewBox="0 0 16 16"><path d="M.5 4.500h10v7H.5ZM.5 0v2.500h10V0M.5 16v-2.500h10V16M14 0v3M14 7v9" fill="none" stroke="#eee" stroke-width="1.200"/><path d="M12.500 4h3v3h-3Z" fill="#eee"/></svg></div>
  <div class="flex w-[54px] items-center justify-center"><svg class="size-[23px]" viewBox="0 0 24 24"><path d="M7 2h8c2 0 2 1 3 4H12L9 18H4c-4 0-4-4-3-7 1-4 2-9 6-9Z" fill="#2a8ce8"/><path d="M2 12c2-2 5-1 8-1l-2 7H4c-3 0-3-3-2-6Z" fill="#7bcf4a"/><path d="M17 22H9c-2 0-2-1-3-4h6l3-12h5c4 0 4 4 3 7-1 4-2 9-6 9Z" fill="#e0568e"/><path d="M17 22H9c-2 0-2-1-3-4h6l1-4h9c-1 5-2 8-5 8Z" fill="#fb9a4a"/><path d="m15 6 5 0c3 0 3.500 3 3 5h-9Z" fill="#a35ee8"/></svg></div>
  <div class="flex w-[44px] items-center justify-center"><svg class="size-6"><use href="#i-edge"/></svg></div>
  <div class="ml-[8px] flex w-10 items-center justify-center border-b-2 border-[#76b9ed]"><svg class="h-5 w-6" viewBox="0 0 24 20"><path d="M1 1h8l2 2h12v16H1Z" fill="#f5b92f"/><path d="M1 5h22v14H1Z" fill="#ffd968"/><path d="M5 19v-8h14v8h-4v-4H9v4Z" fill="#3c8fd8"/></svg></div>
  <div class="ml-[9px] flex w-10 items-center justify-center"><svg class="size-6" viewBox="0 0 24 24"><path d="M7 6V2h10v4" fill="none" stroke="#24a3e8" stroke-width="2"/><path d="M1 5h22v16q0 2-2 2H3q-2 0-2-2Z" fill="#f6f6f6"/><path d="M7 9h4.500v4.500H7Z" fill="#f04e24"/><path d="M12.500 9H17v4.500h-4.500Z" fill="#7fba00"/><path d="M7 14.500h4.500V19H7Z" fill="#00a4ef"/><path d="M12.500 14.500H17V19h-4.500Z" fill="#ffb900"/></svg></div>
  <div class="ml-[9px] flex w-10 items-center justify-center"><svg class="size-6" viewBox="0 0 24 24"><path d="m6 6 8-6 10 7v15H6Z" fill="#1976d2"/><path d="m6 6 8-6 10 7-10 8Z" fill="#59b7f2"/><path d="m6 22 18-14v14Z" fill="#28a8ea"/><path d="M0 6h13v13H0Z" fill="#0f6cbd"/><circle cx="6.500" cy="12.500" r="3.300" fill="none" stroke="#fff" stroke-width="1.800"/></svg></div>
  <div class="ml-[9px] flex w-10 items-center justify-center border-b-2 border-[#76b9ed]"><svg class="size-[26px]" viewBox="0 0 26 26"><circle cx="12" cy="12" r="12" fill="#5865f2"/><path d="M6 8q6-3 12 0 3 4 2 9-2 2-4 2l-1-2H9l-1 2q-2 0-4-2-1-5 2-9Z" fill="#fff"/><circle cx="9" cy="13" r="1.600" fill="#5865f2"/><circle cx="18.500" cy="18.500" r="7.500" fill="#e04848"/><text x="18.500" y="22.500" text-anchor="middle" fill="#fff" font-size="11" font-weight="600" font-family="Open Sans">3</text></svg></div>
  <div class="ml-[9px] flex w-10 items-center justify-center border-b-2 border-[#76b9ed]"><svg class="size-6" viewBox="0 0 24 24"><path d="M2 0h14l5 5-3 19H3L0 18Z" fill="#087cfa"/><path d="m18 2 6 0-1 20-12 2Z" fill="#fcf84a"/><path d="M0 12h8l6 12H3Z" fill="#07c3f2"/><path d="M4 4h16v16H4Z" fill="#000"/><text x="5" y="12" fill="#fff" font-size="8" font-weight="700" font-family="Open Sans">WS</text><path d="M6 17h6" stroke="#fff"/></svg></div>
  <div class="ml-[9px] flex w-10 items-center justify-center border-b-2 border-[#76b9ed]"><svg class="size-6" viewBox="0 0 24 24"><path d="M2 0h14l5 5-3 19H3L0 18Z" fill="#0abde8"/><path d="m18 2 6 0-1 20-12 2Z" fill="#21d789"/><path d="M0 12h8l6 12H3Z" fill="#fcf84a"/><path d="M4 4h16v16H4Z" fill="#000"/><text x="5.500" y="12" fill="#fff" font-size="8" font-weight="700" font-family="Open Sans">PC</text><path d="M6 17h6" stroke="#fff"/></svg></div>
  <div class="ml-[9px] flex w-10 items-center justify-center border-b-2 border-[#76b9ed]"><svg class="size-6" viewBox="0 0 24 24"><path d="M0 0h24v24H0Z" fill="#b00a0a"/><path d="M13 4H8L4 20M6 12h5M12 10h8l-9 9h8" fill="none" stroke="#fff" stroke-width="2.700"/></svg></div>
  <div class="ml-[5px] flex w-12 items-center justify-center border-b-2 border-[#76b9ed] bg-[#565656]"><svg class="size-6" viewBox="0 0 24 24"><circle cx="12" cy="12" r="12" fill="#fbc116"/><path d="M1.600 6A12 12 0 0 1 22.400 6H12L6.800 15Z" fill="#ea4335"/><path d="M1.600 6A12 12 0 0 0 12 24l5.200-9L12 12Z" fill="#34a853"/><path d="M12 6h10.400A12 12 0 0 1 12 24l5.200-9Z" fill="#fbc116"/><circle cx="12" cy="12" r="5.700" fill="#fff"/><circle cx="12" cy="12" r="4.500" fill="#4285f4"/></svg></div>
  <div class="ml-px flex w-12 items-center justify-center border-b-2 border-[#ff7a1a] bg-[#ad652f]"><svg class="size-6" viewBox="0 0 24 24"><rect width="24" height="24" rx="3" fill="#fae100"/><ellipse cx="12" cy="11" rx="10" ry="7.500" fill="#3b1e1e"/><path d="m7 16-1 5 5-3Z" fill="#3b1e1e"/><text x="12" y="13.500" text-anchor="middle" font-size="6.500" font-weight="800" fill="#fae100" font-family="Open Sans">TALK</text></svg></div>
  <div class="ml-auto flex items-center text-[14px]">
    <svg class="h-6 w-[23px]" viewBox="0 0 23 24"><path d="M1 16c10-1 15-4 19-12M14 3l7-2v7" fill="none" stroke="#d0401e" stroke-width="3"/><path d="M1 21h3v3H1ZM6 19h3v5H6ZM11 17h4v7h-4ZM17 12h4v12h-4Z" fill="#e0481e"/></svg>
    <span class="ml-[7px] w-[72px] text-[15px]">코스피 50</span><span class="w-[73px] text-[#f0555d]">+1.13%</span>
    <svg class="h-[7px] w-[12px]" viewBox="0 0 12 7"><path d="m.7 6.300 5.300-5.300 5.300 5.300" fill="none" stroke="#fff" stroke-width="1.300"/></svg>
    <svg class="ml-[12px] h-4 w-[12px]" viewBox="0 0 12 16"><path d="M.6 4.500h7v7h-7ZM7.600 7 11 5v6L7.600 9M2 1.500q4-2 8 0M2 14.500q4 2 8 0" fill="none" stroke="#fff" stroke-width="1.200"/></svg>
    <svg class="ml-[9px] h-[15px] w-4" viewBox="0 0 16 15"><path d="M4 3h11.500v8H6M10 11v3M7 14h6M.6.600h3.500v5H.6ZM2.500 5.500V11H5" fill="none" stroke="#fff" stroke-width="1.200"/></svg>
    <svg class="ml-2 h-3 w-[15px]" viewBox="0 0 15 12"><path d="M.6 4v4h2L6.500 11V1L2.600 4ZM10 4l4 4m0-4-4 4" fill="none" stroke="#fff" stroke-width="1.200"/></svg>
    <svg class="ml-[9px] size-[15px]" viewBox="0 0 15 15"><circle cx="7.500" cy="7.500" r="7.300" fill="#b8b8b8"/><path d="m4.500 4.500 6 6m0-6-6 6" stroke="#222" stroke-width="1.700"/></svg>
    <div class="ml-[8px] w-[70px] text-center text-[12px] leading-[18px]">오전 9:49<br>2025-09-12</div>
    <svg class="ml-[16px] h-[26px] w-[26px]" viewBox="0 0 26 26"><path d="M1 2h16v12H8l-3 4v-4H1Z" fill="#fff"/><path d="M3 5.500h12M3 8.500h12M3 11.500h7" stroke="#282828"/><circle cx="17" cy="18" r="7.500" fill="#282828" stroke="#aaa"/><text x="17" y="22.300" text-anchor="middle" fill="#fff" font-size="12" font-family="Noto Sans">4</text></svg>
    <span class="ml-[11px] h-10 border-l border-[#666]"></span><span class="w-1"></span>
  </div>
</div>
</body>
</html>
